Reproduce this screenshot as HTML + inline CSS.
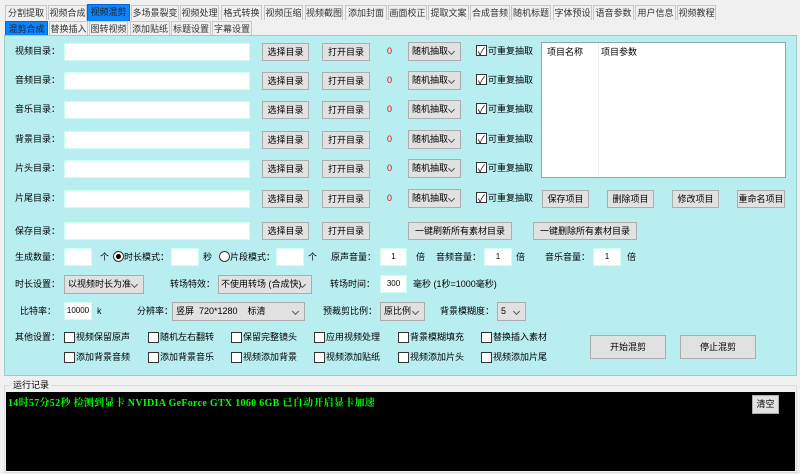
<!DOCTYPE html><html><head><meta charset="utf-8"><style>
*{box-sizing:border-box;margin:0;padding:0}
body{width:800px;height:474px;background:#f0f0f0;font-family:"Liberation Sans","Noto Sans CJK SC",sans-serif;font-size:9px;color:#000;position:relative;overflow:hidden}
div{white-space:nowrap}
.a{position:absolute}
.tab{position:absolute;height:15px;border:1px solid #c8c8c8;border-bottom:none;background:#f0f0f0;line-height:14px;text-align:center;color:#333;font-size:9px;overflow:hidden}
.tab.on{background:#0a84ff;border-color:#0a64d8;color:#222}
.panel{position:absolute;left:4px;top:35px;width:793px;height:341px;background:#b8eef0;border:1px solid #9cc}
.in{position:absolute;height:18px;background:#fff;border:1px solid #cfe;font-size:8px;line-height:16px;text-align:center}
.btn{position:absolute;height:18px;background:#e1e1e1;border:1px solid #adadad;line-height:16px;text-align:center;font-size:9px;overflow:hidden}
.sel{position:absolute;height:19px;background:#e1e1e1;border:1px solid #acacac;line-height:17px;padding-left:3px;font-size:9px;overflow:hidden}
.sel:after{content:"";position:absolute;right:6px;top:6px;width:4px;height:4px;border-right:1px solid #555;border-bottom:1px solid #555;transform:rotate(45deg)}
.cb{position:absolute;width:11px;height:11px;border:1px solid #333;background:#fff}
.ck:after{content:"✓";position:absolute;left:1px;top:-3px;font-size:10px}
.lab{position:absolute;line-height:12px}
</style></head><body>
<div class="tab" style="left:5px;top:5px;width:42px">分割提取</div>
<div class="tab" style="left:48px;top:5px;width:39px">视频合成</div>
<div class="tab on" style="left:87px;top:4px;width:43px;height:17px">视频混剪</div>
<div class="tab" style="left:131px;top:5px;width:48px">多场景裂变</div>
<div class="tab" style="left:180px;top:5px;width:39px">视频处理</div>
<div class="tab" style="left:221px;top:5px;width:41px">格式转换</div>
<div class="tab" style="left:264px;top:5px;width:39px">视频压缩</div>
<div class="tab" style="left:305px;top:5px;width:38px">视频截图</div>
<div class="tab" style="left:345px;top:5px;width:42px">添加封面</div>
<div class="tab" style="left:388px;top:5px;width:39px">画面校正</div>
<div class="tab" style="left:428px;top:5px;width:41px">提取文案</div>
<div class="tab" style="left:470px;top:5px;width:40px">合成音频</div>
<div class="tab" style="left:511px;top:5px;width:40px">随机标题</div>
<div class="tab" style="left:553px;top:5px;width:39px">字体预设</div>
<div class="tab" style="left:593px;top:5px;width:41px">语音参数</div>
<div class="tab" style="left:635px;top:5px;width:41px">用户信息</div>
<div class="tab" style="left:677px;top:5px;width:39px">视频教程</div>
<div class="tab on" style="left:5px;top:21px;width:43px;height:15px">混剪合成</div>
<div class="tab" style="left:49px;top:21px;width:39px;height:14px">替换插入</div>
<div class="tab" style="left:89px;top:21px;width:39px;height:14px">图转视频</div>
<div class="tab" style="left:130px;top:21px;width:40px;height:14px">添加贴纸</div>
<div class="tab" style="left:171px;top:21px;width:40px;height:14px">标题设置</div>
<div class="tab" style="left:212px;top:21px;width:40px;height:14px">字幕设置</div>
<div class="panel"></div>

<div class="lab" style="left:15px;top:45px">视频目录：</div><div class="in" style="left:64px;top:43px;width:186px"></div><div class="btn" style="left:262px;top:43px;width:47px">选择目录</div><div class="btn" style="left:322px;top:43px;width:48px">打开目录</div><div class="lab" style="left:387px;top:45px;color:#e00">0</div><div class="sel" style="left:408px;top:42px;width:53px">随机抽取</div><div class="cb ck" style="left:476px;top:45px"></div><div class="lab" style="left:488px;top:45px">可重复抽取</div>
<div class="lab" style="left:15px;top:74px">音频目录：</div><div class="in" style="left:64px;top:72px;width:186px"></div><div class="btn" style="left:262px;top:72px;width:47px">选择目录</div><div class="btn" style="left:322px;top:72px;width:48px">打开目录</div><div class="lab" style="left:387px;top:74px;color:#e00">0</div><div class="sel" style="left:408px;top:71px;width:53px">随机抽取</div><div class="cb ck" style="left:476px;top:74px"></div><div class="lab" style="left:488px;top:74px">可重复抽取</div>
<div class="lab" style="left:15px;top:103px">音乐目录：</div><div class="in" style="left:64px;top:101px;width:186px"></div><div class="btn" style="left:262px;top:101px;width:47px">选择目录</div><div class="btn" style="left:322px;top:101px;width:48px">打开目录</div><div class="lab" style="left:387px;top:103px;color:#e00">0</div><div class="sel" style="left:408px;top:100px;width:53px">随机抽取</div><div class="cb ck" style="left:476px;top:103px"></div><div class="lab" style="left:488px;top:103px">可重复抽取</div>
<div class="lab" style="left:15px;top:133px">背景目录：</div><div class="in" style="left:64px;top:131px;width:186px"></div><div class="btn" style="left:262px;top:131px;width:47px">选择目录</div><div class="btn" style="left:322px;top:131px;width:48px">打开目录</div><div class="lab" style="left:387px;top:133px;color:#e00">0</div><div class="sel" style="left:408px;top:130px;width:53px">随机抽取</div><div class="cb ck" style="left:476px;top:133px"></div><div class="lab" style="left:488px;top:133px">可重复抽取</div>
<div class="lab" style="left:15px;top:162px">片头目录：</div><div class="in" style="left:64px;top:160px;width:186px"></div><div class="btn" style="left:262px;top:160px;width:47px">选择目录</div><div class="btn" style="left:322px;top:160px;width:48px">打开目录</div><div class="lab" style="left:387px;top:162px;color:#e00">0</div><div class="sel" style="left:408px;top:159px;width:53px">随机抽取</div><div class="cb ck" style="left:476px;top:162px"></div><div class="lab" style="left:488px;top:162px">可重复抽取</div>
<div class="lab" style="left:15px;top:192px">片尾目录：</div><div class="in" style="left:64px;top:190px;width:186px"></div><div class="btn" style="left:262px;top:190px;width:47px">选择目录</div><div class="btn" style="left:322px;top:190px;width:48px">打开目录</div><div class="lab" style="left:387px;top:192px;color:#e00">0</div><div class="sel" style="left:408px;top:189px;width:53px">随机抽取</div><div class="cb ck" style="left:476px;top:192px"></div><div class="lab" style="left:488px;top:192px">可重复抽取</div>

<div class="a" style="left:541px;top:42px;width:245px;height:136px;background:#fff;border:1px solid #8aa"></div>
<div class="lab" style="left:547px;top:46px">项目名称</div><div class="lab" style="left:601px;top:46px">项目参数</div>
<div class="a" style="left:598px;top:43px;width:1px;height:134px;background:#eee"></div>
<div class="btn" style="left:542px;top:190px;width:47px">保存项目</div><div class="btn" style="left:607px;top:190px;width:47px">删除项目</div><div class="btn" style="left:672px;top:190px;width:47px">修改项目</div><div class="btn" style="left:737px;top:190px;width:48px">重命名项目</div>

<div class="lab" style="left:15px;top:225px">保存目录：</div><div class="in" style="left:64px;top:222px;width:186px"></div><div class="btn" style="left:262px;top:222px;width:47px">选择目录</div><div class="btn" style="left:322px;top:222px;width:48px">打开目录</div>
<div class="btn" style="left:408px;top:222px;width:104px">一键刷新所有素材目录</div><div class="btn" style="left:533px;top:222px;width:104px">一键删除所有素材目录</div>

<div class="lab" style="left:15px;top:251px">生成数量：</div><div class="in" style="left:64px;top:248px;width:28px"></div><div class="lab" style="left:100px;top:251px">个</div>
<div class="a" style="left:113px;top:251px;width:11px;height:11px;border:1px solid #333;border-radius:50%;background:#fff"><div style="margin:2px;width:5px;height:5px;border-radius:50%;background:#000"></div></div><div class="lab" style="left:124px;top:251px">时长模式：</div><div class="in" style="left:171px;top:248px;width:28px"></div><div class="lab" style="left:203px;top:251px">秒</div>
<div class="a" style="left:219px;top:251px;width:11px;height:11px;border:1px solid #333;border-radius:50%;background:#fff"></div><div class="lab" style="left:230px;top:251px">片段模式：</div><div class="in" style="left:276px;top:248px;width:28px"></div><div class="lab" style="left:308px;top:251px">个</div>
<div class="lab" style="left:331px;top:251px">原声音量：</div><div class="in" style="left:380px;top:248px;width:27px">1</div><div class="lab" style="left:416px;top:251px">倍</div>
<div class="lab" style="left:436px;top:251px">音频音量：</div><div class="in" style="left:484px;top:248px;width:28px">1</div><div class="lab" style="left:516px;top:251px">倍</div>
<div class="lab" style="left:545px;top:251px">音乐音量：</div><div class="in" style="left:593px;top:248px;width:28px">1</div><div class="lab" style="left:627px;top:251px">倍</div>

<div class="lab" style="left:15px;top:278px">时长设置：</div><div class="sel" style="left:64px;top:275px;width:80px">以视频时长为准</div>
<div class="lab" style="left:170px;top:278px">转场特效：</div><div class="sel" style="left:218px;top:275px;width:94px;padding-left:2px">不使用转场 (合成快)</div>
<div class="lab" style="left:330px;top:278px">转场时间：</div><div class="in" style="left:380px;top:275px;width:27px">300</div><div class="lab" style="left:413px;top:278px">毫秒 (1秒=1000毫秒)</div>

<div class="lab" style="left:20px;top:305px">比特率：</div><div class="in" style="left:64px;top:302px;width:28px">10000</div><div class="lab" style="left:97px;top:305px">k</div>
<div class="lab" style="left:137px;top:305px">分辨率：</div><div class="sel" style="left:172px;top:302px;width:133px">竖屏&nbsp; 720*1280 &nbsp;&nbsp; 标清</div>
<div class="lab" style="left:323px;top:305px">预裁剪比例：</div><div class="sel" style="left:380px;top:302px;width:45px">原比例</div>
<div class="lab" style="left:440px;top:305px">背景模糊度：</div><div class="sel" style="left:497px;top:302px;width:29px">5</div>

<div class="lab" style="left:15px;top:331px">其他设置：</div>
<div class="cb" style="left:64px;top:332px"></div><div class="lab" style="left:76px;top:331px">视频保留原声</div>
<div class="cb" style="left:148px;top:332px"></div><div class="lab" style="left:160px;top:331px">随机左右翻转</div>
<div class="cb" style="left:231px;top:332px"></div><div class="lab" style="left:243px;top:331px">保留完整镜头</div>
<div class="cb" style="left:314px;top:332px"></div><div class="lab" style="left:326px;top:331px">应用视频处理</div>
<div class="cb" style="left:398px;top:332px"></div><div class="lab" style="left:410px;top:331px">背景模糊填充</div>
<div class="cb" style="left:481px;top:332px"></div><div class="lab" style="left:493px;top:331px">替换插入素材</div>
<div class="cb" style="left:64px;top:352px"></div><div class="lab" style="left:76px;top:351px">添加背景音频</div>
<div class="cb" style="left:148px;top:352px"></div><div class="lab" style="left:160px;top:351px">添加背景音乐</div>
<div class="cb" style="left:231px;top:352px"></div><div class="lab" style="left:243px;top:351px">视频添加背景</div>
<div class="cb" style="left:314px;top:352px"></div><div class="lab" style="left:326px;top:351px">视频添加贴纸</div>
<div class="cb" style="left:398px;top:352px"></div><div class="lab" style="left:410px;top:351px">视频添加片头</div>
<div class="cb" style="left:481px;top:352px"></div><div class="lab" style="left:493px;top:351px">视频添加片尾</div>
<div class="btn" style="left:590px;top:335px;width:76px;height:24px;line-height:22px">开始混剪</div>
<div class="btn" style="left:680px;top:335px;width:76px;height:24px;line-height:22px">停止混剪</div>

<div class="a" style="left:4px;top:385px;width:793px;height:88px;border:1px solid #dcdcdc"></div>
<div class="lab" style="left:11px;top:379px;background:#f0f0f0;padding:0 2px">运行记录</div>
<div class="a" style="left:6px;top:392px;width:789px;height:79px;background:#000"></div>
<div class="a" style="left:8px;top:394px;color:#0f0;font-family:'Liberation Serif','Noto Serif CJK SC',serif;font-weight:bold;font-size:10px;letter-spacing:0.3px">14时57分52秒 检测到显卡 NVIDIA GeForce GTX 1060 6GB 已自动开启显卡加速</div>
<div class="btn" style="left:752px;top:395px;width:27px;height:19px">清空</div>
</body></html>
